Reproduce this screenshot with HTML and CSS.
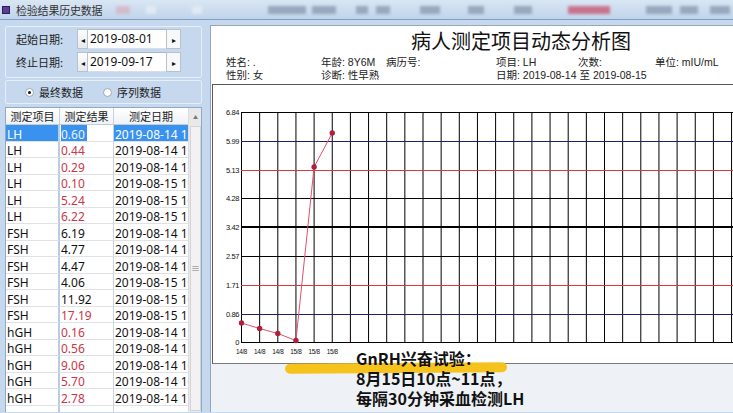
FILE: index.html
```html
<!DOCTYPE html>
<html>
<head>
<meta charset="utf-8">
<link rel="stylesheet" href="styles.css">
</head>
<body>
<div class="titlebar">
  <span class="appicon"></span>
  <span class="title">检验结果历史数据</span>
  <div class="blurs">
    <span class="bl b1"></span><span class="bl b2"></span><span class="bl b3"></span>
    <span class="bl b4"></span><span class="bl b5"></span><span class="bl b6"></span>
    <span class="bl b7"></span><span class="bl b8"></span><span class="bl b9"></span>
    <span class="bl b10"></span><span class="bl b11"></span><span class="bl b12"></span>
    <span class="bl b13"></span><span class="bl b14"></span>
  </div>
</div>
<div class="main">
  <div class="left">
    <div class="group dates">
      <div class="daterow">
        <span class="dlabel">起始日期:</span>
        <div class="spin"><span class="sbtn sl">&#9666;</span><span class="sval">2019-08-01</span><span class="sbtn sr">&#9656;</span></div>
      </div>
      <div class="daterow">
        <span class="dlabel">终止日期:</span>
        <div class="spin"><span class="sbtn sl">&#9666;</span><span class="sval">2019-09-17</span><span class="sbtn sr">&#9656;</span></div>
      </div>
    </div>
    <div class="group radios">
      <span class="radio"><span class="rc on"></span>最终数据</span>
      <span class="radio"><span class="rc"></span>序列数据</span>
    </div>
    <div class="grid">
      <div class="cols">
        <div class="row head"><span>测定项目</span><span>测定结果</span><span>测定日期</span></div>
        <div class="row sel"><span>LH</span><span><em>0.60</em></span><span>2019-08-14 15:00</span></div>
        <div class="row"><span>LH</span><span class="hi">0.44</span><span>2019-08-14 15:30</span></div>
        <div class="row"><span>LH</span><span class="hi">0.29</span><span>2019-08-14 16:00</span></div>
        <div class="row"><span>LH</span><span class="hi">0.10</span><span>2019-08-15 10:00</span></div>
        <div class="row"><span>LH</span><span class="hi">5.24</span><span>2019-08-15 10:30</span></div>
        <div class="row"><span>LH</span><span class="hi">6.22</span><span>2019-08-15 11:00</span></div>
        <div class="row"><span>FSH</span><span>6.19</span><span>2019-08-14 15:00</span></div>
        <div class="row"><span>FSH</span><span>4.77</span><span>2019-08-14 15:30</span></div>
        <div class="row"><span>FSH</span><span>4.47</span><span>2019-08-14 16:00</span></div>
        <div class="row"><span>FSH</span><span>4.06</span><span>2019-08-15 10:00</span></div>
        <div class="row"><span>FSH</span><span>11.92</span><span>2019-08-15 10:30</span></div>
        <div class="row"><span>FSH</span><span class="hi">17.19</span><span>2019-08-15 11:00</span></div>
        <div class="row"><span>hGH</span><span class="hi">0.16</span><span>2019-08-14 15:00</span></div>
        <div class="row"><span>hGH</span><span class="hi">0.56</span><span>2019-08-14 15:30</span></div>
        <div class="row"><span>hGH</span><span class="hi">9.06</span><span>2019-08-14 16:00</span></div>
        <div class="row"><span>hGH</span><span class="hi">5.70</span><span>2019-08-14 16:30</span></div>
        <div class="row"><span>hGH</span><span class="hi">2.78</span><span>2019-08-14 17:00</span></div>
        <div class="row"><span></span><span></span><span></span></div>
      </div>
      <div class="vscroll">
        <div class="sup">&#9650;</div>
        <div class="thumb"><span class="grip">&#8801;</span></div>
      </div>
    </div>
  </div>
  <div class="right">
    <div class="rtitle">病人测定项目动态分析图</div>
    <div class="info">
      <span>姓名: .</span><span>年龄: 8Y6M</span><span>病历号:</span><span></span><span>项目: LH</span><span>次数:</span><span>单位: mIU/mL</span>
      <span>性别: 女</span><span>诊断: 性早熟</span><span></span><span></span><span class="span3">日期: 2019-08-14 至 2019-08-15</span>
    </div>
    <div class="chart">
      <svg class="plot" width="530" height="279" viewBox="213 86 530 279" xmlns="http://www.w3.org/2000/svg">
        <g fill="none" stroke="#000" stroke-width="1">
          <path d="M241.5 113V343M259.65 113V343M277.8 113V343M295.95 113V343M314.1 113V343M332.25 113V343M350.4 113V343M368.55 113V343M386.7 113V343M404.85 113V343M423 113V343M441.15 113V343M459.3 113V343M477.45 113V343M495.6 113V343M513.75 113V343M531.9 113V343M550.05 113V343M568.2 113V343M586.35 113V343M604.5 113V343M622.65 113V343M640.8 113V343M658.95 113V343M677.1 113V343M695.25 113V343M713.4 113V343M731.55 113V343"/>
          <path d="M241 113.5H740M241 199.5H740M241 257.5H740M241 343.5H740"/>
          <path d="M241 228H740" stroke-width="2"/>
          <path d="M241 142.5H740M241 315.5H740" stroke="#20206a"/>
          <path d="M241 171.5H740M241 286.5H740" stroke="#d83a3a"/>
        </g>
        <g class="ylab" text-anchor="end">
          <text x="239" y="116">6.84</text>
          <text x="239" y="145">5.99</text>
          <text x="239" y="174">5.13</text>
          <text x="239" y="202">4.28</text>
          <text x="239" y="231">3.42</text>
          <text x="239" y="260">2.57</text>
          <text x="239" y="289">1.71</text>
          <text x="239" y="318">0.86</text>
          <text x="239" y="346">0</text>
        </g>
        <g class="xlab" text-anchor="middle">
          <text x="241.5" y="355">14/8</text>
          <text x="259.65" y="355">14/8</text>
          <text x="277.8" y="355">14/8</text>
          <text x="295.95" y="355">15/8</text>
          <text x="314.1" y="355">15/8</text>
          <text x="332.25" y="355">15/8</text>
        </g>
        <polyline points="241.5,324 259.65,329.5 277.8,334.5 295.95,341.5 314.1,168 332.25,134" fill="none" stroke="#e0506a" stroke-width="1"/>
        <g fill="#b0203c">
          <circle cx="241.5" cy="324" r="2.7"/>
          <circle cx="259.65" cy="329.5" r="2.7"/>
          <circle cx="277.8" cy="334.5" r="2.7"/>
          <circle cx="295.95" cy="341.5" r="2.7"/>
          <circle cx="314.1" cy="168" r="2.7"/>
          <circle cx="332.25" cy="134" r="2.7"/>
        </g>
      </svg>
    </div>
    <div class="below"></div>
    <div class="note">
      <span class="marker"></span>
      <p>GnRH兴奋试验：</p>
      <p>8月15日10点~11点，</p>
      <p>每隔30分钟采血检测LH</p>
    </div>
  </div>
</div>
</body>
</html>
```

FILE: styles.css
```css
* { box-sizing: border-box; margin: 0; padding: 0; }
html, body { width: 733px; height: 413px; overflow: hidden; }
body {
  font-family: "Noto Sans", "Noto Sans CJK SC", sans-serif;
  background: #c5d8ee;
  color: #111;
}

/* title bar */
.titlebar {
  height: 20px;
  background: linear-gradient(#d9e6f4, #c0d4ea);
  border-bottom: 1px solid #7f9fc6;
  display: flex;
  align-items: center;
  padding-left: 2px;
  overflow: hidden;
  white-space: nowrap;
}
.appicon {
  width: 8px; height: 8px;
  background: #5b3d93;
  border: 1px solid #2b1a5e;
  margin-right: 6px;
  flex: none;
}
.title {
  font-family: "Noto Sans CJK SC", sans-serif;
  font-size: 11px;
  color: #333;
  letter-spacing: -0.2px;
}
.blurs { display: flex; align-items: center; height: 20px; }
.bl { display: block; height: 8px; filter: blur(1.6px); background: #8797ad; opacity: .75; }
.b1 { margin-left: 14px; width: 14px; background: #d9a6b6; opacity: .6; }
.b2 { margin-left: 16px; width: 10px; background: #e8eef6; }
.b3 { margin-left: 36px; width: 10px; background: #e8eef6; }
.b4 { margin-left: 66px; width: 38px; }
.b5 { margin-left: 6px; width: 24px; }
.b6 { margin-left: 20px; width: 12px; }
.b7 { margin-left: 8px; width: 14px; }
.b8 { margin-left: 30px; width: 20px; }
.b9 { margin-left: 28px; width: 16px; }
.b10 { margin-left: 30px; width: 18px; }
.b11 { margin-left: 36px; width: 42px; background: #c8506c; }
.b12 { margin-left: 36px; width: 26px; }
.b13 { margin-left: 8px; width: 18px; }
.b14 { margin-left: 12px; width: 20px; }

.main { display: flex; height: 392px; }

/* left side */
.left {
  width: 210px;
  flex: none;
  padding: 6px 8px 0 5px;
  display: flex;
  flex-direction: column;
}
.group {
  border: 1px solid #e6eef8;
  border-radius: 2px;
}
.dates { padding: 2px 0 5px 10px; display: flex; flex-direction: column; gap: 3px; }
.daterow { display: flex; align-items: center; height: 20px; }
.dlabel {
  width: 61px;
  font-family: "Noto Sans CJK SC", sans-serif;
  font-size: 11px;
  color: #222;
}
.spin { display: flex; height: 20px; }
.sbtn {
  display: flex; align-items: center; justify-content: center;
  background: linear-gradient(#fdfdfd, #e6e9ed);
  border: 1px solid #b9c2cc;
  font-size: 8px;
  color: #111;
}
.sl { width: 11px; }
.sr { width: 15px; background: #f6f8fa; }
.sval {
  width: 78px;
  background: #fff;
  border-top: 1px solid #a7b6c8;
  border-bottom: 1px solid #d7dee6;
  font-size: 12px;
  line-height: 18px;
  padding-left: 2px;
  color: #111;
}

.radios {
  margin-top: 2px;
  height: 24px;
  display: flex;
  align-items: center;
  padding-left: 19px;
  font-family: "Noto Sans CJK SC", sans-serif;
  font-size: 11px;
  color: #222;
}
.radio { display: flex; align-items: center; gap: 5px; }
.radio + .radio { margin-left: 20px; }
.rc {
  width: 9px; height: 9px;
  border-radius: 50%;
  border: 1px solid #9aa6b6;
  background: #fff;
  display: flex; align-items: center; justify-content: center;
}
.rc.on::after {
  content: "";
  width: 3px; height: 3px; border-radius: 50%;
  background: #111;
}

/* data grid */
.grid {
  margin-top: 3px;
  flex: 1;
  display: flex;
  background: #fff;
  border: 1px solid #8fa9c6;
  border-bottom: none;
  overflow: hidden;
}
.cols { width: 182px; flex: none; }
.row {
  display: grid;
  grid-template-columns: 54px 54px 74px;
  height: 16.5px;
  font-size: 12px;
  line-height: 12.5px;
  white-space: nowrap;
}
.row > span {
  overflow: hidden;
  border-bottom: 1px solid #e0e1e4;
  padding: 3.5px 0 0 1px;
}
.row > span:nth-child(1) { border-right: 2px solid #b8cde4; }
.row > span:nth-child(2) { border-right: 1px solid #c6d5e6; }
.hi { color: #cc3647; }
.head { height: 17px; }
.head > span {
  background: linear-gradient(#ffffff, #eef2f6);
  border-bottom: 1px solid #c3ccd6;
  text-align: center;
  font-family: "Noto Sans CJK SC", sans-serif;
  font-size: 11px;
  line-height: 16px;
  padding: 0;
  color: #222;
}
.head > span:nth-child(1) { border-right: 1px solid #c8d0da; }
.head > span:nth-child(2) { border-right: 1px solid #c8d0da; }
.sel > span:nth-child(1), .sel > span:nth-child(3) { background: #3993ee; color: #fff; }
.sel > span:nth-child(2) { padding-top: 0; }
.sel em {
  font-style: normal; display: inline-block; width: 26px; height: 15.5px;
  padding-top: 3.5px; background: #3993ee; color: #e8f2ff;
}

.vscroll {
  flex: 1;
  background: #e9e9ea;
  border-left: 1px solid #dcdcdc;
  display: flex;
  flex-direction: column;
}
.sup {
  height: 17px;
  font-size: 5px;
  color: #777;
  display: flex; align-items: center; justify-content: center;
}
.thumb {
  margin: 1px 1px 0 1px;
  height: 285px;
  background: #f2f2f3;
  border: 1px solid #d4d4d6;
  display: flex; align-items: center; justify-content: center;
}
.grip { font-size: 9px; color: #777; line-height: 1; }

/* right side */
.right {
  flex: 1;
  margin-top: 5px;
  background: #fff;
  border-left: 1px solid #8fa6c2;
  border-top: 1px solid #9aa6b4;
  position: relative;
  display: flex;
  flex-direction: column;
}
.rtitle {
  padding: 3px 0 0 200px;
  font-family: "Noto Sans CJK SC", sans-serif;
  font-size: 20px;
  line-height: 24px;
  color: #111;
  white-space: nowrap;
}
.info {
  margin-top: 3px;
  padding-left: 15px;
  display: grid;
  grid-template-columns: 95px 65px 30px 80px 82px 77px auto;
  grid-auto-rows: 13px;
  font-family: "Liberation Sans", "Noto Sans CJK SC", sans-serif;
  font-size: 10.5px;
  line-height: 13px;
  color: #222;
  white-space: nowrap;
}
.span3 { grid-column: span 3; }
.chart {
  margin: 2px 0 0 1px;
  height: 280px;
  border-top: 1px solid #5a5a5a;
  border-left: 1px solid #5a5a5a;
  border-bottom: 1px solid #7a7a7a;
  overflow: hidden;
}
.plot { display: block; }
.ylab text { font-family: "Liberation Sans", sans-serif; font-size: 7.5px; fill: #111; letter-spacing: -0.4px; }
.xlab text { font-family: "Liberation Sans", sans-serif; font-size: 6.4px; fill: #111; letter-spacing: -0.3px; }
.below { flex: 1; background: #eef1f5; }

.note {
  position: absolute;
  left: 74px;
  top: 322px;
  padding-left: 71px;
  font-family: "Noto Sans CJK SC", sans-serif;
  font-weight: 700;
  font-size: 16px;
  line-height: 20px;
  color: #111;
  white-space: nowrap;
}
.note p { position: relative; }
.marker {
  position: absolute;
  left: 0;
  top: 15px;
  width: 222px;
  height: 10px;
  border-radius: 5px;
  background: #f6c21c;
  transform: rotate(-0.4deg);
}
```
